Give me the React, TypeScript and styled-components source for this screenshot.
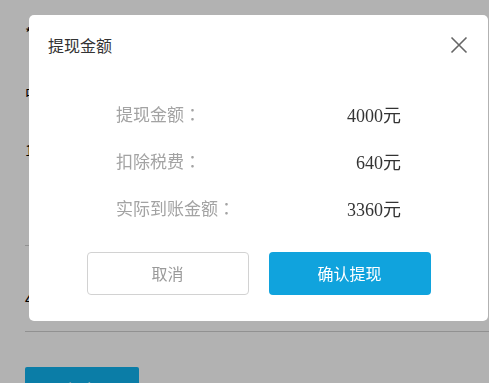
import React from "react";
import styled, { createGlobalStyle } from "styled-components";

const GlobalStyle = createGlobalStyle`
  html, body {
    margin: 0;
    padding: 0;
    background: #ffffff;
    font-family: "Noto Sans CJK SC", "Noto Sans", sans-serif;
    overflow: hidden;
  }
`;

const rows = [
  { label: "提现金额", value: "4000元" },
  { label: "扣除税费", value: "640元" },
  { label: "实际到账金额", value: "3360元" },
];

export default function App() {
  return (
    <>
      <GlobalStyle />
      <Page>
        <FormLine top={24}>* 提现金额</FormLine>
        <FormLine top={43}>中国银行</FormLine>
        <FormLine top={40}>1234 5678</FormLine>
        <FormLine top={40}>· 到账时间</FormLine>
        <Divider top={30} short />
        <FormLine top={44}>4000元</FormLine>
        <Divider top={24} />
        <SubmitButton>提交</SubmitButton>
      </Page>
      <Overlay />
      <Modal>
        <Header>
          <Title>提现金额</Title>
          <Close aria-label="close">
            <svg width="18" height="18" viewBox="0 0 18 18">
              <path
                d="M1.5 1.5 L16.5 16.5 M16.5 1.5 L1.5 16.5"
                stroke="#666"
                strokeWidth="1.6"
                fill="none"
              />
            </svg>
          </Close>
        </Header>
        <Rows>
          {rows.map((r) => (
            <Row key={r.label}>
              <Label>
                {r.label}
                <Colon>：</Colon>
              </Label>
              <Value>{r.value}</Value>
            </Row>
          ))}
        </Rows>
        <Actions>
          <CancelButton>取消</CancelButton>
          <ConfirmButton>确认提现</ConfirmButton>
        </Actions>
      </Modal>
    </>
  );
}

const Page = styled.div`
  display: flex;
  flex-direction: column;
  padding: 0 0 0 25px;
`;

const FormLine = styled.div<{ top: number }>`
  flex-shrink: 0;
  margin-top: ${(p) => p.top}px;
  font-size: 15px;
  line-height: 17px;
  color: #000;
`;

const Divider = styled.div<{ top: number; short?: boolean }>`
  flex-shrink: 0;
  height: 1px;
  background: #d0d0d0;
  margin-top: ${(p) => p.top}px;
  width: ${(p) => (p.short ? "40px" : "100%")};
`;

const SubmitButton = styled.div`
  flex-shrink: 0;
  margin-top: 35px;
  width: 114px;
  height: 44px;
  border-radius: 2px 2px 0 0;
  background: #10b3ef;
  color: #fff;
  font-size: 15px;
  line-height: 44px;
  text-align: center;
`;

const Overlay = styled.div`
  position: fixed;
  inset: 0;
  background: rgba(0, 0, 0, 0.3);
`;

const Modal = styled.div`
  position: fixed;
  left: 29px;
  top: 15px;
  width: 459px;
  background: #fff;
  border-radius: 5px;
  padding-bottom: 26px;
  display: flex;
  flex-direction: column;
`;

const Header = styled.div`
  height: 60px;
  display: flex;
  align-items: center;
  justify-content: space-between;
  padding: 0 20px 0 19px;
`;

const Title = styled.div`
  font-size: 16px;
  color: #333;
`;

const Close = styled.div`
  width: 18px;
  height: 18px;
  display: flex;
`;

const Rows = styled.div`
  width: 285px;
  margin: 15px auto 0;
  display: flex;
  flex-direction: column;
`;

const Row = styled.div`
  height: 47px;
  display: flex;
  align-items: center;
  justify-content: space-between;
`;

const Label = styled.span`
  font-size: 17px;
  color: #a3a3a3;
`;

const Colon = styled.span`
  font-family: "Noto Sans CJK TC", "Noto Sans CJK SC", sans-serif;
`;

const Value = styled.span`
  font-family: "Liberation Serif", "Noto Sans CJK SC", serif;
  font-size: 18px;
  color: #333;
`;

const Actions = styled.div`
  margin-top: 21px;
  display: flex;
  justify-content: center;
  gap: 20px;
`;

const BaseButton = styled.div`
  width: 162px;
  height: 43px;
  box-sizing: border-box;
  border-radius: 4px;
  font-size: 16px;
  line-height: 43px;
  text-align: center;
`;

const CancelButton = styled(BaseButton)`
  border: 1px solid #d2d2d2;
  color: #9a9a9a;
  line-height: 41px;
`;

const ConfirmButton = styled(BaseButton)`
  background: #10a3dd;
  color: #fff;
`;
